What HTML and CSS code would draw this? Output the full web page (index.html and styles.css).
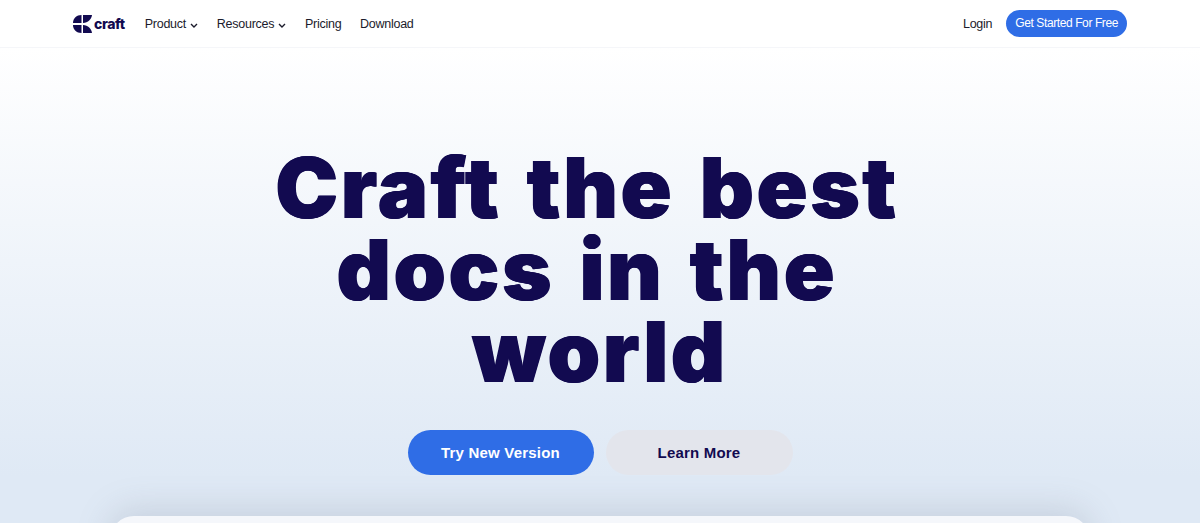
FILE: index.html
```html
<!DOCTYPE html>
<html lang="en">
<head>
    <meta charset="UTF-8">
    <title>Craft</title>
    <link rel="stylesheet" href="styles.css">
</head>
<body>
    <header class="nav">
        <div class="nav-left">
            <a class="logo" href="#">
                <svg class="logo-mark" width="19" height="18" viewBox="0 0 19 18">
                    <path d="M0 8 C0 3.5 3.5 0 8.5 0 L8.5 8 Z" fill="#120a50"/>
                    <path d="M10 8 L10 0 L19 0 C18.5 4 15 8 10 8 Z" fill="#120a50"/>
                    <path d="M0 10 L8.5 10 L8.5 18 C3.5 18 0 14.5 0 10 Z" fill="#120a50"/>
                    <path d="M10 10 C15 10 18.5 14 19 18 L10 18 Z" fill="#120a50"/>
                </svg>
                <span class="logo-text">craft</span>
            </a>
            <a class="nav-link" href="#">Product <svg class="chevron" width="8" height="5" viewBox="0 0 8 5"><path d="M1 1 L4 4 L7 1" fill="none" stroke="#1b1b2b" stroke-width="1.4"/></svg></a>
            <a class="nav-link" href="#">Resources <svg class="chevron" width="8" height="5" viewBox="0 0 8 5"><path d="M1 1 L4 4 L7 1" fill="none" stroke="#1b1b2b" stroke-width="1.4"/></svg></a>
            <a class="nav-link" href="#">Pricing</a>
            <a class="nav-link" href="#">Download</a>
        </div>
        <div class="nav-right">
            <a class="nav-link" href="#">Login</a>
            <a class="nav-cta" href="#">Get Started For Free</a>
        </div>
    </header>

    <main class="hero">
        <h1><span class="line-short">Craft the best</span><span class="line-short">docs in the</span><span class="line">world</span></h1>
        <div class="hero-buttons">
            <a class="btn btn-primary" href="#">Try New Version</a>
            <a class="btn btn-secondary" href="#">Learn More</a>
        </div>
        <div class="preview"></div>
    </main>
</body>
</html>
```

FILE: styles.css
```css
* { box-sizing: border-box; }
body {
    margin: 0;
    height: 523px;
    overflow: hidden;
    font-family: "Liberation Sans", Arial, sans-serif;
    background: #fff;
}
a { text-decoration: none; color: inherit; }

.nav {
    height: 48px;
    display: flex;
    justify-content: space-between;
    align-items: center;
    padding: 0 73px;
    background: #fff;
    border-bottom: 1px solid #f5f6f9;
}
.nav-left, .nav-right { display: flex; align-items: center; }
.nav-left { gap: 18.5px; }
.nav-right { gap: 14px; }
.logo { display: flex; align-items: center; gap: 2px; margin-right: 1.5px; }
.logo-text {
    font-family: Inter, "Liberation Sans", sans-serif;
    font-weight: 800;
    font-size: 14px;
    letter-spacing: -0.4px;
    color: #120a50;
}
.nav-link { font-size: 12.5px; letter-spacing: -0.25px; color: #1b1b2b; white-space: nowrap; }
.chevron { margin-left: 1px; }
.nav-cta {
    background: #2f6de6;
    color: #fff;
    font-size: 12px;
    height: 27px;
    line-height: 27px;
    padding: 0 9px;
    border-radius: 14px;
    letter-spacing: -0.4px;
    white-space: nowrap;
}

.hero {
    height: 475px;
    overflow: hidden;
    display: flex;
    flex-direction: column;
    align-items: center;
    padding-top: 99px;
    background: linear-gradient(#ffffff 0%, #dfe9f5 90%, #dfe9f5 100%);
}
h1 {
    margin: 0;
    font-family: Inter, "Liberation Sans", sans-serif;
    font-size: 84px;
    line-height: 82px;
    font-weight: 900;
    letter-spacing: 2.7px;
    word-spacing: 6px;
    text-align: center;
    color: #120a50;
    text-shadow: 0.6px 0 0 #120a50, -0.6px 0 0 #120a50;
}
.line, .line-short { display: block; }
.line-short { padding-right: 26px; }
.hero-buttons { display: flex; gap: 12px; margin-top: 37px; }
.btn {
    width: 187px;
    height: 45px;
    line-height: 45px;
    border-radius: 23px;
    text-align: center;
    font-size: 15px;
    font-weight: 700;
    letter-spacing: 0.2px;
}
.btn-primary { background: #2f6de6; color: #fff; width: 186px; }
.btn-secondary { background: #e3e5ec; color: #120a50; }
.preview {
    width: 980px;
    flex: none;
    height: 60px;
    margin-top: 41px;
    background: #f5f7fb;
    border-radius: 24px 24px 0 0;
    box-shadow: 0 -6px 34px rgba(110, 120, 135, 0.22);
}
```
